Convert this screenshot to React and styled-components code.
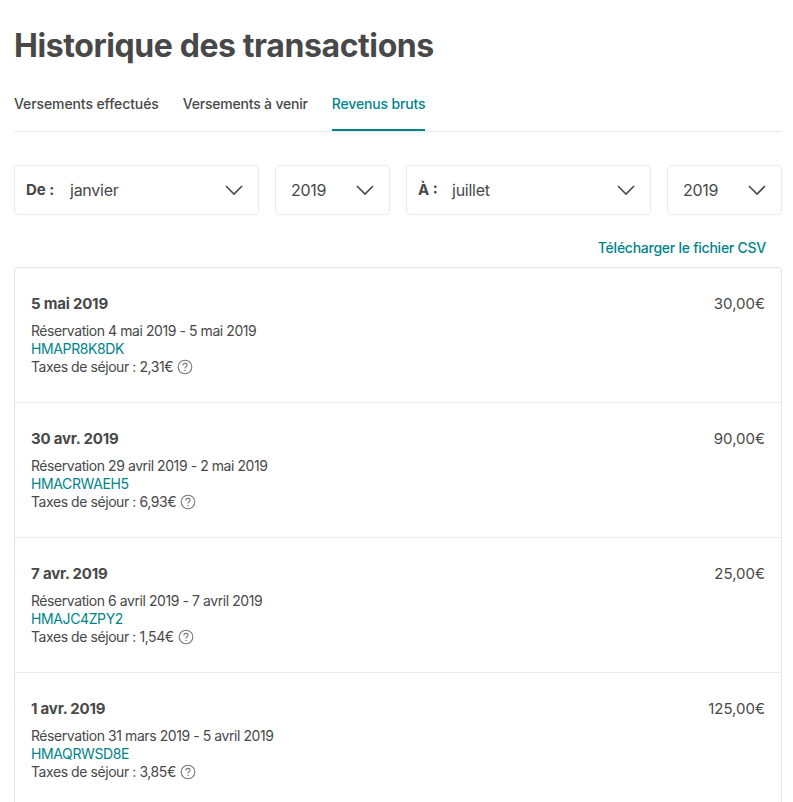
import React from "react";
import styled, { createGlobalStyle } from "styled-components";

const Global = createGlobalStyle`
  html, body { margin: 0; padding: 0; background: #fff; height: 802px; overflow: hidden; }
  body { font-family: "Inter", "Noto Sans", sans-serif; color: #484848; }
`;
const Page = styled.div`
  padding: 24px 11px 0 14px;
`;
const Title = styled.h1`
  margin: 0;
  font-size: 32px;
  line-height: 44px;
  font-weight: 700;
  letter-spacing: -0.41px;
  color: #484848;
`;
const Tabs = styled.div`
  display: flex;
  gap: 24px;
  margin-top: 18px;
  border-bottom: 1px solid #ebebeb;
  height: 45px;
`;
const Tab = styled.div`
  font-size: 14px;
  font-weight: 500;
  line-height: 18px;
  letter-spacing: ${p => p.$spacing}px;
  padding-top: 9px;
  box-sizing: border-box;
  height: 45px;
  color: ${p => (p.$active ? "#008489" : "#484848")};
  border-bottom: ${p => (p.$active ? "2px solid #008489" : "none")};
`;
const Filters = styled.div`
  display: grid;
  grid-template-columns: 245px 115px 245px 115px;
  gap: 16px;
  margin-top: 33px;
`;
const Select = styled.div`
  display: flex;
  align-items: center;
  height: 50px;
  box-sizing: border-box;
  border: 1px solid #ebebeb;
  border-radius: 4px;
  padding: 0 15px 0 ${p => (p.$year ? "15px" : "11px")};
`;
const SelectLabel = styled.span`
  font-size: 15px;
  font-weight: 700;
  width: ${p => p.$width}px;
  margin-bottom: 2px;
`;
const SelectValue = styled.span`
  font-size: 16px;
  letter-spacing: -0.25px;
  flex: 1;
`;
const Chevron = () => (
  <svg width="18" height="18" viewBox="0 0 18 18" fill="none" stroke="#484848" strokeWidth="1.6">
    <path d="M1 5l8 8 8-8" />
  </svg>
);
const CsvRow = styled.div`
  display: flex;
  justify-content: flex-end;
  padding-right: 16px;
  margin-top: 24px;
  height: 18px;
`;
const CsvLink = styled.a`
  font-size: 14px;
  line-height: 18px;
  font-weight: 500;
  letter-spacing: -0.25px;
  color: #008489;
`;
const Card = styled.div`
  margin-top: 10px;
  border: 1px solid #e4e4e4;
  border-radius: 4px;
`;
const Row = styled.div`
  display: flex;
  justify-content: space-between;
  height: 135px;
  box-sizing: border-box;
  padding: 26px 16px 0;
  border-bottom: 1px solid #ebebeb;
`;
const RowDate = styled.div`
  font-size: 15px;
  font-weight: 700;
  line-height: 20px;
  letter-spacing: -0.2px;
  margin-bottom: 8px;
`;
const Line = styled.div`
  font-size: 14px;
  line-height: 18px;
  letter-spacing: -0.43px;
  display: flex;
  align-items: center;
`;
const Code = styled(Line)`
  color: #008489;
  letter-spacing: -0.38px;
`;
const Amount = styled.div`
  font-size: 15px;
  line-height: 20px;
`;
const HelpIcon = styled.svg`
  margin-left: 4px;
  flex: none;
`;
const Help = () => (
  <HelpIcon width="16" height="16" viewBox="0 0 16 16" fill="none">
    <circle cx="8" cy="8" r="6.8" stroke="#767676" strokeWidth="1.1" />
    <path d="M5.9 6.4c0-1.2.9-2 2.1-2s2.1.8 2.1 1.9c0 1.5-2.1 1.5-2.1 3.1" stroke="#767676" strokeWidth="1.1" />
    <circle cx="8" cy="11.4" r=".75" fill="#767676" />
  </HelpIcon>
);

const rows = [
  ["5 mai 2019", "Réservation 4 mai 2019 - 5 mai 2019", "HMAPR8K8DK", "2,31€", "30,00€"],
  ["30 avr. 2019", "Réservation 29 avril 2019 - 2 mai 2019", "HMACRWAEH5", "6,93€", "90,00€"],
  ["7 avr. 2019", "Réservation 6 avril 2019 - 7 avril 2019", "HMAJC4ZPY2", "1,54€", "25,00€"],
  ["1 avr. 2019", "Réservation 31 mars 2019 - 5 avril 2019", "HMAQRWSD8E", "3,85€", "125,00€"],
];

export default function App() {
  return (
    <Page>
      <Global />
      <Title>Historique des transactions</Title>
      <Tabs>
        <Tab $spacing={-0.1}>Versements effectués</Tab>
        <Tab $spacing={-0.2}>Versements à venir</Tab>
        <Tab $spacing={-0.15} $active>Revenus bruts</Tab>
      </Tabs>
      <Filters>
        <Select><SelectLabel $width={44}>De :</SelectLabel><SelectValue>janvier</SelectValue><Chevron /></Select>
        <Select $year><SelectValue>2019</SelectValue><Chevron /></Select>
        <Select><SelectLabel $width={34}>À :</SelectLabel><SelectValue>juillet</SelectValue><Chevron /></Select>
        <Select $year><SelectValue>2019</SelectValue><Chevron /></Select>
      </Filters>
      <CsvRow><CsvLink>Télécharger le fichier CSV</CsvLink></CsvRow>
      <Card>
        {rows.map(r => (
          <Row key={r[2]}>
            <div>
              <RowDate>{r[0]}</RowDate>
              <Line>{r[1]}</Line>
              <Code>{r[2]}</Code>
              <Line>Taxes de séjour : {r[3]}<Help /></Line>
            </div>
            <Amount>{r[4]}</Amount>
          </Row>
        ))}
      </Card>
    </Page>
  );
}
